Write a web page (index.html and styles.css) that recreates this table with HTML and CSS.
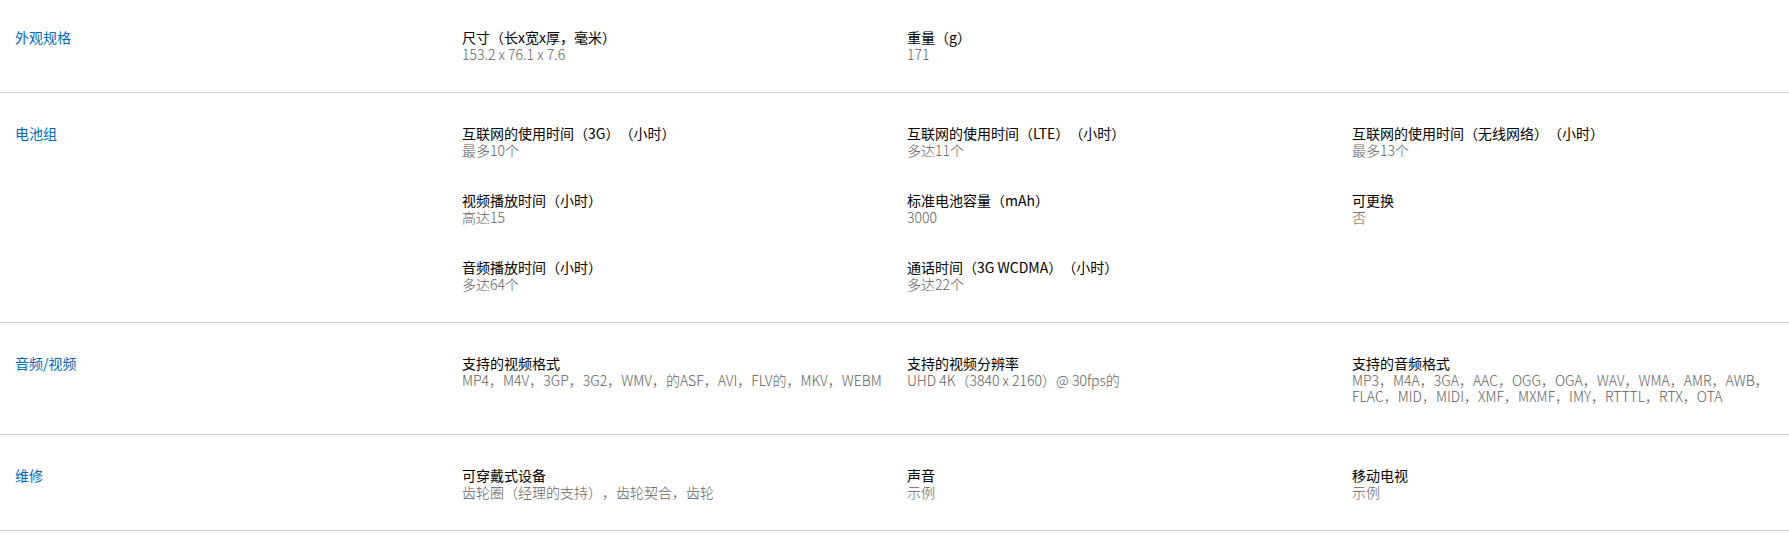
FILE: index.html
```html
<!DOCTYPE html>
<html lang="zh-CN">
<head>
<meta charset="utf-8">
<title>规格</title>
<link rel="stylesheet" href="styles.css">
</head>
<body>
<div class="specs">
  <section class="spec-row first">
    <h3 class="spec-label">外观规格</h3>
    <div class="spec-items">
      <div class="item"><div class="item-title">尺寸（长x宽x厚，毫米）</div><div class="item-value">153.2 x 76.1 x 7.6</div></div>
      <div class="item"><div class="item-title">重量（g）</div><div class="item-value">171</div></div>
    </div>
  </section>
  <section class="spec-row">
    <h3 class="spec-label">电池组</h3>
    <div class="spec-items">
      <div class="item"><div class="item-title">互联网的使用时间（3G）（小时）</div><div class="item-value">最多10个</div></div>
      <div class="item"><div class="item-title">互联网的使用时间（LTE）（小时）</div><div class="item-value">多达11个</div></div>
      <div class="item"><div class="item-title">互联网的使用时间（无线网络）（小时）</div><div class="item-value">最多13个</div></div>
      <div class="item"><div class="item-title">视频播放时间（小时）</div><div class="item-value">高达15</div></div>
      <div class="item"><div class="item-title">标准电池容量（mAh）</div><div class="item-value">3000</div></div>
      <div class="item"><div class="item-title">可更换</div><div class="item-value">否</div></div>
      <div class="item"><div class="item-title">音频播放时间（小时）</div><div class="item-value">多达64个</div></div>
      <div class="item"><div class="item-title">通话时间（3G WCDMA）（小时）</div><div class="item-value">多达22个</div></div>
    </div>
  </section>
  <section class="spec-row">
    <h3 class="spec-label">音频/视频</h3>
    <div class="spec-items">
      <div class="item"><div class="item-title">支持的视频格式</div><div class="item-value">MP4，M4V，3GP，3G2，WMV，的ASF，AVI，FLV的，MKV，WEBM</div></div>
      <div class="item"><div class="item-title">支持的视频分辨率</div><div class="item-value">UHD 4K（3840 x 2160）@ 30fps的</div></div>
      <div class="item"><div class="item-title">支持的音频格式</div><div class="item-value">MP3，M4A，3GA，AAC，OGG，OGA，WAV，WMA，AMR，AWB，FLAC，MID，MIDI，XMF，MXMF，IMY，RTTTL，RTX，OTA</div></div>
    </div>
  </section>
  <section class="spec-row">
    <h3 class="spec-label">维修</h3>
    <div class="spec-items">
      <div class="item"><div class="item-title">可穿戴式设备</div><div class="item-value">齿轮圈（经理的支持），齿轮契合，齿轮</div></div>
      <div class="item"><div class="item-title">声音</div><div class="item-value">示例</div></div>
      <div class="item"><div class="item-title">移动电视</div><div class="item-value">示例</div></div>
    </div>
  </section>
</div>
</body>
</html>
```
FILE: styles.css
```css
html, body {
  margin: 0;
  padding: 0;
  background: #fff;
}
body {
  font-family: "Noto Sans CJK SC", "Noto Sans", sans-serif;
  font-size: 14px;
  color: #000;
  text-spacing-trim: space-all;
  font-feature-settings: "halt" 0, "chws" 0;
}
.specs {
  display: flex;
  flex-direction: column;
}
.spec-row {
  display: grid;
  grid-template-columns: 447px 1fr;
  padding: 32px 0 30px 15px;
  border-bottom: 1px solid #cfcfcf;
}
.spec-row.first {
  padding-top: 29px;
}
.spec-label {
  margin: 0;
  font-size: 14px;
  font-weight: normal;
  line-height: 17px;
  color: #0067b8;
}
.spec-items {
  display: grid;
  grid-template-columns: 445px 445px 1fr;
  row-gap: 34px;
  padding-right: 20px;
}
.item-title {
  line-height: 17px;
  color: #000;
}
.item-value {
  line-height: 16px;
  color: #5e5e5e;
  font-weight: 300;
}
```
